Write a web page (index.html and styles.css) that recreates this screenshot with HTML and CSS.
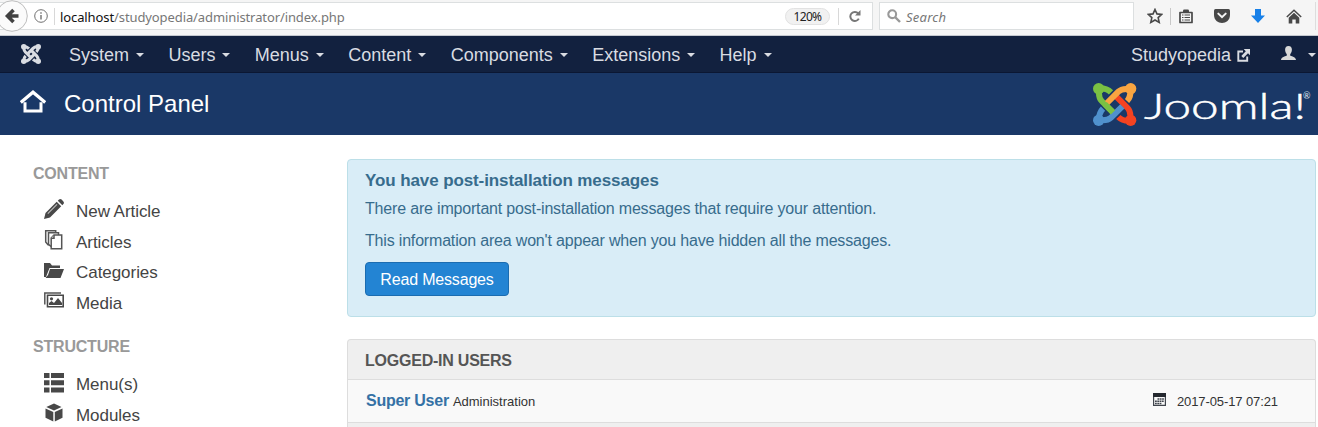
FILE: index.html
```html
<!DOCTYPE html>
<html lang="en">
<head>
<meta charset="utf-8">
<title>Control Panel - Studyopedia - Administration</title>
<link rel="stylesheet" href="styles.css">
</head>
<body>
<div class="browser">
  <div class="address">
    <div class="back"><svg width="28" height="32" viewBox="0 0 28 32"><circle cx="12" cy="16" r="15.3" fill="#fbfbfb" stroke="#bdbdbd"/><path d="M18.500 16H8M13.500 10L7.500 16l6 6" fill="none" stroke="#424242" stroke-width="3.600"/></svg></div>
    <svg class="info" width="14" height="14" viewBox="0 0 14 14"><circle cx="7" cy="7" r="6.300" fill="none" stroke="#707070"/><path d="M7 6v4.500M7 3.300v1.500" stroke="#707070" stroke-width="1.400"/></svg>
    <span class="rule"></span>
    <span class="url"><b>localhost</b>/studyopedia/administrator/index.php</span>
    <span class="zoom">120%</span>
    <span class="rule"></span>
    <svg class="reload" width="12" height="12" viewBox="0 0 12 12"><path d="M9.300 3.600A4.500 4.500 0 1 0 9.800 8.600" fill="none" stroke="#777" stroke-width="2"/><path d="M11.500 0v5.500H6z" fill="#777"/></svg>
  </div>
  <div class="search">
    <svg width="14" height="14" viewBox="0 0 14 14"><circle cx="5.200" cy="5.200" r="3.900" fill="none" stroke="#999" stroke-width="2.100"/><path d="M8 8l5 5" stroke="#999" stroke-width="2.400"/></svg>
    <span>Search</span>
  </div>
  <div class="tools">
    <svg width="16" height="16" viewBox="0 0 16 16"><path d="M8 1.500l1.950 4.400 4.800.5-3.600 3.200 1.050 4.800L8 11.950 3.800 14.400l1.050-4.800-3.600-3.200 4.800-.5z" fill="none" stroke="#484848" stroke-width="1.600"/></svg>
    <span class="sep"></span>
    <svg class="clip" width="14" height="15" viewBox="0 0 14 15"><path d="M1 3.500h12v10H1z" fill="#f6f6f6" stroke="#484848" stroke-width="1.700" stroke-linejoin="round"/><path d="M4 3.500V1.800Q4 .5 5.300.5h3.400Q10 .5 10 1.800v1.700z" fill="#484848"/><path d="M3 6h1.500M5.500 6H11M3 8.500h1.500M5.500 8.500H11M3 11h1.500M5.500 11H11" stroke="#484848" stroke-width="1.200"/></svg>
    <svg class="pocket" width="16" height="14" viewBox="0 0 16 14"><path d="M1.500 0h13q1.500 0 1.500 1.500V6c0 10.500-16 10.500-16 0V1.500Q0 0 1.500 0z" fill="#484848"/><path d="M4.300 4.600L8 8.200l3.700-3.600" fill="none" stroke="#f6f6f6" stroke-width="2" stroke-linecap="round"/></svg>
    <svg class="download" width="14" height="14" viewBox="0 0 14 14"><path d="M4 0h6v6.500h4L7 14 0 6.500h4z" fill="#1780e8"/></svg>
    <svg class="home" width="16" height="15" viewBox="0 0 16 15"><path d="M.8 8L8 1.300 15.200 8" fill="none" stroke="#484848" stroke-width="1.500"/><path d="M8 3.800l5.300 4.900v5.800h-3.600v-4H6.300v4H2.700V8.700z" fill="#484848"/></svg>
    <span class="sep end"></span>
  </div>
</div>

<nav class="navbar">
  <svg class="mark" width="20" height="20" viewBox="0 0 130 130"><g fill="none" stroke="#d9dce2" stroke-width="20"><path d="M16 16C20 30 18 42 28 52L62 86M16 16C35 15 42 20 52 30"/><path d="M114 16C100 18 88 18 78 28L44 62M114 16C112 35 110 42 100 52"/><path d="M114 113C112 99 112 87 102 77L68 43M114 113C95 115 88 110 78 100"/><path d="M16 113C30 112 42 112 52 102L86 68M16 113C18 95 20 87 30 77"/></g><g fill="#d9dce2"><circle cx="18" cy="18" r="18"/><circle cx="112" cy="18" r="18"/><circle cx="18" cy="112" r="18"/><circle cx="112" cy="112" r="18"/></g></svg>
  <div class="menu">
    <a>System<i></i></a><a>Users<i></i></a><a>Menus<i></i></a><a>Content<i></i></a><a>Components<i></i></a><a>Extensions<i></i></a><a>Help<i></i></a>
  </div>
  <a class="site">Studyopedia<svg width="13" height="13" viewBox="0 0 13 13"><path d="M6 2.500H1.300v9.200h8.900V7.500" fill="none" stroke="#d9dce2" stroke-width="1.900"/><path d="M6.700 0H13v6.300l-2-2-4.700 4.600-2-2L8.800 2.200z" fill="#d9dce2"/></svg></a>
  <a class="account"><svg width="15" height="14" viewBox="0 0 15 14"><path d="M7.500 0c2.300 0 3.400 1.500 3.400 3.600 0 1.900-.8 3.600-1.700 4.600v1.200c0 .5 5.800 1.400 5.800 4.600H0c0-3.200 5.800-4.100 5.800-4.600V8.200c-.9-1-1.700-2.700-1.700-4.600C4.100 1.500 5.200 0 7.500 0z" fill="#d9d9d9"/></svg><i></i></a>
</nav>

<header class="header">
  <svg class="house" width="26" height="23" viewBox="0 0 26 23"><path d="M.8 12.500L13 2.200l12.200 10.300" fill="none" stroke="#fff" stroke-width="3.200"/><path d="M5 12.300v8.700h16v-8.700" fill="none" stroke="#fff" stroke-width="3"/></svg>
  <h1>Control Panel</h1>
  <svg class="logo" width="225" height="48" viewBox="0 0 225 48">
    <g transform="translate(0 2) scale(.3333)">
      <g fill="none" stroke-width="18">
        <path d="M16 113C18 95 20 87 30 77" stroke="#5091cd"/>
        <path d="M16 16C20 30 14 42 26 54L60 88M16 16C35 15 44 18 54 28" stroke="#7ac143"/>
        <path d="M114 113C110 99 116 87 104 75L70 41M114 113C95 115 86 112 76 102" stroke="#f44321"/>
        <path d="M16 113C30 110 42 116 54 104L88 70" stroke="#5091cd"/>
        <path d="M114 16C100 20 88 14 76 26L42 60M114 16C112 35 112 44 102 54" stroke="#f9a541"/>
        <path d="M35 63L60 88" stroke="#7ac143"/>
      </g>
      <circle cx="17" cy="17" r="17" fill="#7ac143"/><circle cx="113" cy="17" r="17" fill="#f9a541"/><circle cx="17" cy="112" r="17" fill="#5091cd"/><circle cx="113" cy="112" r="17" fill="#f44321"/>
    </g>
    <text class="wordmark" x="51" y="37.500" textLength="162" lengthAdjust="spacingAndGlyphs">Joomla!</text>
    <text class="registered" x="210" y="18">®</text>
  </svg>
</header>

<div class="page">
  <aside class="sidebar">
    <h2>CONTENT</h2>
    <ul>
      <li><svg width="20" height="20" viewBox="0 0 20 20"><path d="M0 20l1.500-6L12.700 2.800l4.500 4.500L6 18.500zM13.800 1.700L15 .6q1.200-1.100 2.600 0l1.800 1.800q1.100 1.400 0 2.600l-1.100 1.200z" fill="#484848"/><path d="M3.800 14.600L13 5.400" stroke="#bbb" stroke-width="1.200"/></svg>New Article</li>
      <li><svg width="20" height="20" viewBox="0 0 20 20"><g fill="#fff" stroke="#555" stroke-width="1.500"><path d="M1.700.8h10v14H4L1.700 12z"/><path d="M4.500 2.800h10v14h-7l-3-2.500z"/><path d="M10 5h7.700v13.700H7.200V8z"/><path d="M7.200 8.300H10V5"/></g></svg>Articles</li>
      <li><svg width="20" height="20" viewBox="0 0 20 20"><path d="M0 16V2h6l2 2.500h8V7H5.500L2 16zM6 8h14l-3.500 9H1.500L4 14z" fill="#484848"/></svg>Categories</li>
      <li><svg width="20" height="20" viewBox="0 0 20 20"><path d="M.8 13.500V2H17" fill="none" stroke="#555" stroke-width="1.500"/><path d="M3.500 4.200h15.700v11.500H3.500z" fill="#fff" stroke="#484848" stroke-width="1.600"/><circle cx="7.500" cy="7.800" r="1.600" fill="#484848"/><path d="M5 14v-2l2.500-2 2.500 2 4-5 4 5v2z" fill="#484848"/></svg>Media</li>
    </ul>
    <h2 class="second">STRUCTURE</h2>
    <ul>
      <li><svg width="20" height="20" viewBox="0 0 20 20"><path d="M0 0h5.500v5H0zM7 0h13v5H7zM0 7.300h5.500v5H0zM7 7.300h13v5H7zM0 14.500h5.500v5H0zM7 14.500h13v5H7z" fill="#484848"/></svg>Menu(s)</li>
      <li><svg width="20" height="20" viewBox="0 0 20 20"><path d="M10 .5l7.500 3.400L10 7.500 2.300 3.900zM1.500 5.500L9.300 9v9.500l-7.800-3.800zM18.500 5.500L10.800 9v9.500l7.700-3.800z" fill="#484848"/></svg>Modules</li>
    </ul>
  </aside>
  <main class="main">
    <section class="alert">
      <h3>You have post-installation messages</h3>
      <p>There are important post-installation messages that require your attention.</p>
      <p class="last">This information area won't appear when you have hidden all the messages.</p>
      <button>Read Messages</button>
    </section>
    <section class="panel">
      <h3>LOGGED-IN USERS</h3>
      <div class="row">
        <strong>Super User</strong><small>Administration</small>
        <svg width="13" height="13" viewBox="0 0 13 13"><path d="M.6.8h11.800v11.600H.6z" fill="none" stroke="#40454d" stroke-width="1.200"/><path d="M0 0h13v4H0z" fill="#24282f"/><path d="M4.500 6H11M2 8.300h9M2 10.500h6.500" stroke="#40454d" stroke-width="1.500" stroke-dasharray="1.800 .5"/></svg>
        <time>2017-05-17 07:21</time>
      </div>
    </section>
  </main>
</div>
</body>
</html>
```
FILE: styles.css
```css
* { box-sizing: border-box; }
body { margin: 0; background: #fff; font-family: "Liberation Sans", Arial, sans-serif; }
svg { display: block; flex: none; }
h1, h2, h3, p, ul { margin: 0; padding: 0; }
ul { list-style: none; }

.browser { display: flex; height: 36px; padding-top: 2px; background: #f5f5f5; border-bottom: 1px solid #c4c8cf; font-family: "Noto Sans", "Open Sans", sans-serif; font-size: 13px; overflow: hidden; }
.address { display: flex; align-items: center; width: 873px; height: 28px; background: #fff; border: solid #dcdfe0; border-width: 1px 1px 1px 0; }
.back { width: 34px; margin-top: -1px; }
.info { flex: none; }
.rule { width: 1px; height: 17px; margin-left: 6px; background: #d8d8d8; }
.url { width: 725px; margin-left: 5px; padding-top: 1px; color: #777; letter-spacing: -.1px; white-space: nowrap; }
.url b { color: #111; font-weight: 400; }
.zoom { width: 45px; height: 17px; border: 1px solid #e2e2e2; border-radius: 9px; background: #f1f1f1; font-size: 12px; line-height: 15px; text-align: center; color: #222; letter-spacing: -.7px; }
.zoom + .rule { margin-left: 8px; }
.reload { margin-left: 10px; }
.search { display: flex; align-items: center; width: 255px; height: 28px; margin-left: 6px; padding-left: 7px; background: #fff; border: 1px solid #dcdfe0; color: #777; font-style: italic; }
.search span { margin-left: 5px; padding-top: 1px; letter-spacing: .25px; }
.tools { display: flex; align-items: center; height: 28px; margin-left: 13px; }
.sep { width: 1px; height: 17px; margin-left: 7px; background: #c8c8c8; }
.clip { margin-left: 8px; }
.pocket { margin-left: 21px; }
.download { margin-left: 21px; }
.home { margin-left: 21px; }
.end { height: 28px; margin-left: 13px; background: #ddd; }

.navbar { display: flex; align-items: center; height: 37px; background: #12213f; border-bottom: 1px solid #0b1733; color: #d9dce2; font-size: 18px; line-height: 34px; padding-top: 2px; }
.mark { margin: -3px 0 0 21px; }
.menu { display: flex; gap: 24.4px; width: 1062px; margin-left: 28px; }
.menu a { display: flex; align-items: center; }
.navbar i { width: 0; height: 0; border: 4px solid transparent; border-top-color: #d9dce2; border-bottom: 0; margin-left: 7px; }
.site { display: flex; align-items: center; gap: 6px; }
.account { display: flex; align-items: center; margin-left: 31px; }
.account svg { margin-top: -4px; }
.navbar .account i { margin-left: 12px; }

.header { display: flex; height: 62px; background: #1a3867; color: #fff; overflow: hidden; }
.house { margin: 17px 0 0 20px; }
.header h1 { width: 1029px; flex: none; margin-left: 18px; font-size: 24px; font-weight: 400; line-height: 62px; }
.logo { margin-top: 8px; }
.wordmark { fill: #fff; stroke: #fff; stroke-width: .5px; font: 300 36px Lato, sans-serif; }
.registered { fill: #dfe5ef; font: 9px Lato, sans-serif; }

.page { display: flex; height: 292px; overflow: hidden; }
.sidebar { width: 347px; padding: 29px 0 0 33px; }
.sidebar h2 { color: #999; font-size: 16px; line-height: 20px; letter-spacing: -.2px; }
.sidebar .second { margin-top: 18px; }
.sidebar ul { padding: 12.7px 0 0 11px; }
.sidebar li { display: flex; align-items: center; gap: 12px; height: 30.6px; color: #444; font-size: 17px; letter-spacing: -.05px; }
.sidebar li svg { margin-top: -5px; }

.main { width: 969px; padding-top: 24px; }
.alert { height: 158px; padding: 10px 17px 0; background: #d9edf7; border: 1px solid #bcdfe8; border-radius: 4px; color: #376c8d; font-size: 16px; line-height: 22px; }
.alert h3 { font-size: 17px; letter-spacing: -.1px; }
.alert p { margin-top: 6px; letter-spacing: -.18px; }
.alert .last { margin-top: 10px; }
.alert button { display: block; width: 144px; height: 34px; margin-top: 10px; padding: 1px 0 0; border: 1px solid #1b6cb0; border-radius: 4px; background: #2384d3; color: #fff; font: 16px "Liberation Sans", Arial, sans-serif; letter-spacing: -.18px; }
.panel { height: 88px; margin-top: 22px; background: #efefef; border: 1px solid #ddd; border-bottom: 0; border-radius: 4px 4px 0 0; }
.panel h3 { height: 40px; padding-left: 17px; border-bottom: 1px solid #ddd; color: #555; font-size: 16px; line-height: 41px; letter-spacing: -.23px; }
.row { display: flex; align-items: baseline; height: 43px; padding: 0 37px 0 18px; background: #f9f9f9; border-bottom: 1px solid #ddd; line-height: 41px; }
.row strong { color: #3571a5; font-size: 16px; letter-spacing: -.25px; }
.row small { margin-left: 4px; color: #333; font-size: 13px; }
.row svg { margin: 13px 11px 0 auto; align-self: flex-start; }
.row time { color: #333; font-size: 13px; letter-spacing: -.1px; }
```
